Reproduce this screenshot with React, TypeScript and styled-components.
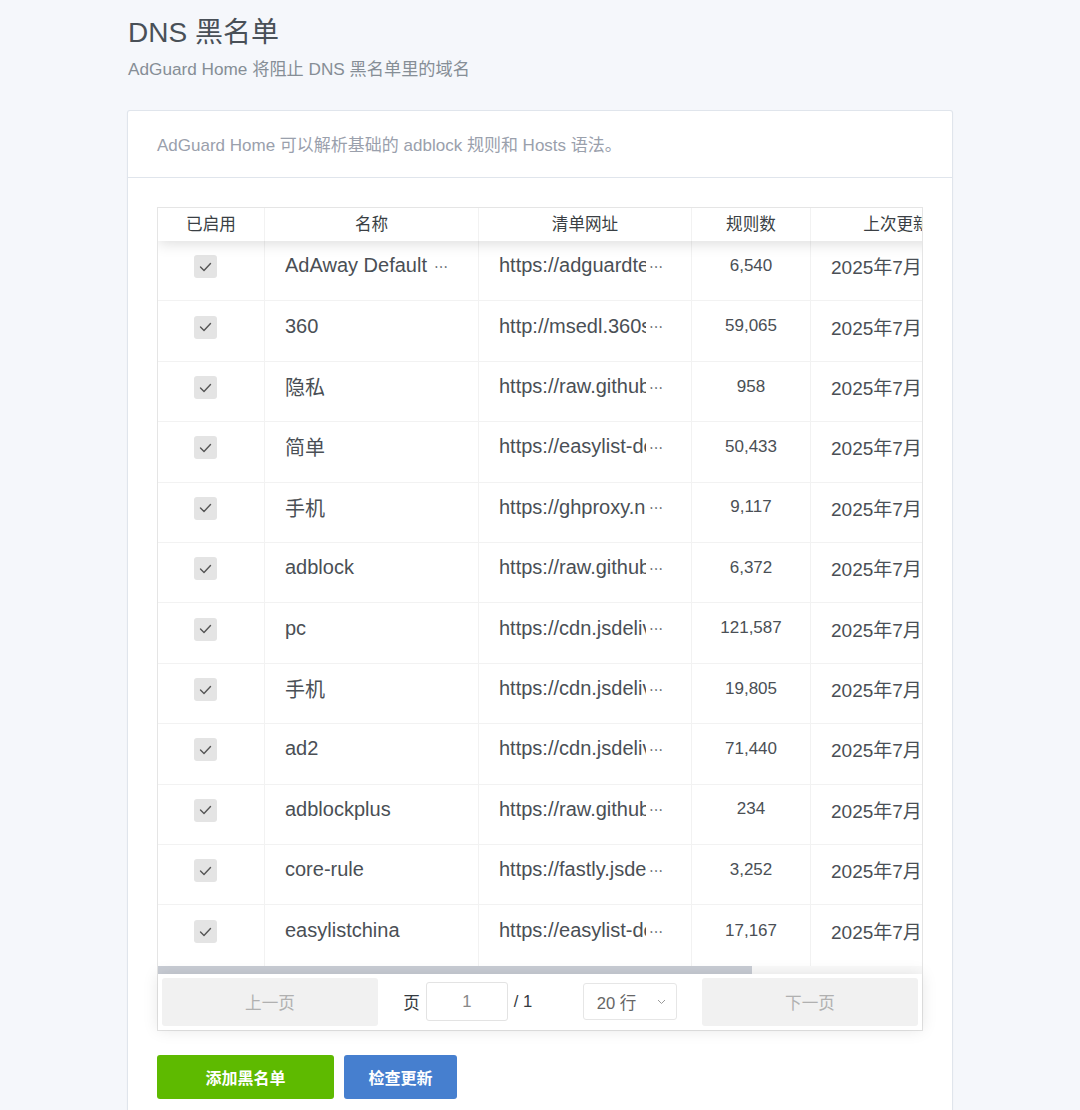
import React from "react";
import styled, { createGlobalStyle } from "styled-components";

const GlobalStyle = createGlobalStyle`
  html, body { margin: 0; padding: 0; }
  body {
    background: #f5f7fb;
    font-family: "Liberation Sans", Arial, "Noto Sans CJK SC", sans-serif;
    color: #495057;
  }
`;

const Page = styled.div`
  width: 826px;
  margin: 0 auto;
  padding-top: 15px;
`;

const PageHeader = styled.header`
  display: flex;
  flex-direction: column;
  gap: 7px;
  margin-bottom: 30px;
  padding-left: 1px;
`;

const Title = styled.h1`
  margin: 0;
  font-size: 28px;
  font-weight: 400;
  line-height: 36px;
  color: #495057;
`;

const Subtitle = styled.div`
  font-size: 17.2px;
  line-height: 22px;
  color: #868e96;
`;

const Card = styled.section`
  background: #fff;
  border: 1px solid rgba(0, 40, 100, 0.12);
  border-radius: 3px;
  box-shadow: 0 1px 2px rgba(0, 0, 0, 0.04);
`;

const CardHeader = styled.div`
  height: 67px;
  display: flex;
  align-items: center;
  padding: 0 29px 2px;
  box-sizing: border-box;
  border-bottom: 1px solid rgba(0, 40, 100, 0.12);
  font-size: 17px;
  color: #9aa0ac;
`;

const CardBody = styled.div`
  padding: 29px 29px 30px;
`;

const Table = styled.div`
  border: 1px solid rgba(0, 0, 0, 0.1);
  background: #fff;
`;

const Scroll = styled.div`
  overflow: hidden;
`;

const Track = styled.div`
  height: 8px;
  background: #fafafa;
`;

const Thumb = styled.div`
  height: 100%;
  background: #c8ccd4;
`;

const Inner = styled.div`
  width: 988px;
`;

const COLS = "107px 214px 213px 119px 172px 163px";

const HeadRow = styled.div`
  position: relative;
  z-index: 1;
  display: grid;
  grid-template-columns: ${COLS};
  height: 33px;
  background: #fff;
  box-shadow: 0 2px 15px 0 rgba(0, 0, 0, 0.15);
`;

const HeadCell = styled.div`
  display: flex;
  align-items: center;
  justify-content: center;
  padding-bottom: 4px;
  border-right: 1px solid rgba(0, 0, 0, 0.05);
  font-size: 16.6px;
  color: #3a3f44;
  white-space: nowrap;
  overflow: hidden;
`;

const Row = styled.div`
  display: grid;
  grid-template-columns: ${COLS};
  height: 60.42px;
  box-sizing: border-box;
  border-bottom: 1px solid rgba(0, 0, 0, 0.05);
  &:last-child { border-bottom: none; }
`;

const Cell = styled.div<{ $align?: "center" | "left"; $padLeft?: number; $padRight?: number; $size?: number }>`
  display: flex;
  align-items: center;
  justify-content: ${(p) => (p.$align === "center" ? "center" : "flex-start")};
  padding: 0 ${(p) => p.$padRight ?? 20}px 10px ${(p) => p.$padLeft ?? 20}px;
  min-width: 0;
  border-right: 1px solid rgba(0, 0, 0, 0.05);
  font-size: ${(p) => p.$size ?? 20}px;
  color: #4a4f55;
  white-space: nowrap;
  overflow: hidden;
`;

const CheckCell = styled(Cell)`
  padding-bottom: 8px;
`;

const Clip = styled.span<{ $max?: number }>`
  overflow: hidden;
  white-space: nowrap;
  min-width: 0;
  flex: 0 1 auto;
  ${(p) => (p.$max ? `max-width: ${p.$max}px;` : "")}
`;

const Dots = styled.span`
  flex: none;
  font-family: "Noto Sans CJK SC", sans-serif;
  font-size: 14px;
  margin-left: 3px;
  color: #495057;
`;

const Check = styled.span`
  width: 23px;
  height: 23px;
  border-radius: 3px;
  background: #e4e4e4;
  display: flex;
  align-items: center;
  justify-content: center;
`;

const Pagination = styled.div`
  display: flex;
  align-items: center;
  padding: 4px;
  box-shadow: 0 0 15px 0 rgba(0, 0, 0, 0.1);
  position: relative;
`;

const PageBtn = styled.button`
  flex: 1;
  height: 48px;
  padding: 0;
  border: none;
  border-radius: 3px;
  background: #f1f1f1;
  color: #b0b0b0;
  font-family: inherit;
  font-size: 16.6px;
  cursor: not-allowed;
`;

const Center = styled.div`
  flex: 1.5;
  display: flex;
  align-items: center;
  justify-content: space-around;
`;

const PageInfo = styled.div`
  display: flex;
  align-items: center;
  gap: 6px;
  font-size: 16.6px;
  color: #343a40;
`;

const PageInput = styled.input`
  width: 82px;
  height: 39px;
  box-sizing: border-box;
  border: 1px solid #e3e3e3;
  border-radius: 3px;
  text-align: center;
  font-family: inherit;
  font-size: 16.6px;
  color: #888;
  outline: none;
`;

const SizeSelect = styled.div`
  width: 94px;
  height: 37px;
  box-sizing: border-box;
  border: 1px solid #e6e6e6;
  border-radius: 3px;
  display: flex;
  align-items: center;
  justify-content: space-between;
  padding: 0 10px 0 13px;
  font-size: 16.6px;
  color: #666;
`;

const Actions = styled.div`
  display: flex;
  gap: 10px;
  margin-top: 24px;
`;

const ActionBtn = styled.button<{ $color: string; $w: number }>`
  width: ${(p) => p.$w}px;
  height: 44px;
  padding: 0;
  border: none;
  border-radius: 3px;
  background: ${(p) => p.$color};
  color: #fff;
  font-family: inherit;
  font-size: 16px;
  font-weight: 600;
`;

type Item = { name: string; url: string; rules: string; nameTrunc?: boolean };

const items: Item[] = [
  { name: "AdAway Default Blocklist", url: "https://adguardteam.github.io/HostlistsRegistry/assets/filter_2.txt", rules: "6,540", nameTrunc: true },
  { name: "360", url: "http://msedl.360safe.com/ad/adfilter.txt", rules: "59,065" },
  { name: "隐私", url: "https://raw.githubusercontent.com/privacy/list.txt", rules: "958" },
  { name: "简单", url: "https://easylist-downloads.adblockplus.org/easyprivacy.txt", rules: "50,433" },
  { name: "手机", url: "https://ghproxy.net/https://raw.githubusercontent.com/mobile.txt", rules: "9,117" },
  { name: "adblock", url: "https://raw.githubusercontent.com/adblock/rules.txt", rules: "6,372" },
  { name: "pc", url: "https://cdn.jsdelivr.net/gh/pc/rules.txt", rules: "121,587" },
  { name: "手机", url: "https://cdn.jsdelivr.net/gh/mobile/rules.txt", rules: "19,805" },
  { name: "ad2", url: "https://cdn.jsdelivr.net/gh/ad2/rules.txt", rules: "71,440" },
  { name: "adblockplus", url: "https://raw.githubusercontent.com/adblockplus/rules.txt", rules: "234" },
  { name: "core-rule", url: "https://fastly.jsdelivr.net/gh/core-rule/rules.txt", rules: "3,252" },
  { name: "easylistchina", url: "https://easylist-downloads.adblockplus.org/easylistchina.txt", rules: "17,167" },
];

const VISIBLE = 766;
const CONTENT = 988;

const CheckIcon = () => (
  <svg width="13" height="10" viewBox="0 0 13 10" fill="none">
    <path d="M1.5 5 L5 8.5 L11.5 1.5" stroke="#555" strokeWidth="1.4" strokeLinecap="round" strokeLinejoin="round" />
  </svg>
);

const Chevron = () => (
  <svg width="9" height="6" viewBox="0 0 9 6" fill="none">
    <path d="M1 1 L4.5 4.5 L8 1" stroke="#999" strokeWidth="1" />
  </svg>
);

export default function App() {
  return (
    <>
      <GlobalStyle />
      <Page>
        <PageHeader>
          <Title>DNS 黑名单</Title>
          <Subtitle>AdGuard Home 将阻止 DNS 黑名单里的域名</Subtitle>
        </PageHeader>
        <Card>
          <CardHeader>AdGuard Home 可以解析基础的 adblock 规则和 Hosts 语法。</CardHeader>
          <CardBody>
            <Table>
              <Scroll>
                <Inner>
                  <HeadRow>
                    <HeadCell>已启用</HeadCell>
                    <HeadCell>名称</HeadCell>
                    <HeadCell>清单网址</HeadCell>
                    <HeadCell>规则数</HeadCell>
                    <HeadCell>上次更新</HeadCell>
                    <HeadCell>操作</HeadCell>
                  </HeadRow>
                  {items.map((it, i) => (
                    <Row key={i}>
                      <CheckCell $padLeft={36}>
                        <Check>
                          <CheckIcon />
                        </Check>
                      </CheckCell>
                      <Cell>
                        {it.nameTrunc ? (
                          <>
                            <Clip $max={146}>{it.name}</Clip>
                            <Dots>⋯</Dots>
                          </>
                        ) : (
                          it.name
                        )}
                      </Cell>
                      <Cell $padRight={28}>
                        <Clip>{it.url}</Clip>
                        <Dots>⋯</Dots>
                      </Cell>
                      <Cell $align="center" $size={17}>
                        {it.rules}
                      </Cell>
                      <Cell $size={19}>2025年7月26日 08:00:00</Cell>
                      <Cell $align="center" $size={16}>
                        删除
                      </Cell>
                    </Row>
                  ))}
                </Inner>
              </Scroll>
              <Track>
                <Thumb style={{ width: `${(VISIBLE / CONTENT) * VISIBLE}px` }} />
              </Track>
              <Pagination>
                <PageBtn disabled>上一页</PageBtn>
                <Center>
                  <PageInfo>
                    页
                    <PageInput defaultValue="1" />
                    / 1
                  </PageInfo>
                  <SizeSelect>
                    20 行
                    <Chevron />
                  </SizeSelect>
                </Center>
                <PageBtn disabled>下一页</PageBtn>
              </Pagination>
            </Table>
            <Actions>
              <ActionBtn $color="#5eba00" $w={177}>添加黑名单</ActionBtn>
              <ActionBtn $color="#467fcf" $w={113}>检查更新</ActionBtn>
            </Actions>
          </CardBody>
        </Card>
      </Page>
    </>
  );
}
